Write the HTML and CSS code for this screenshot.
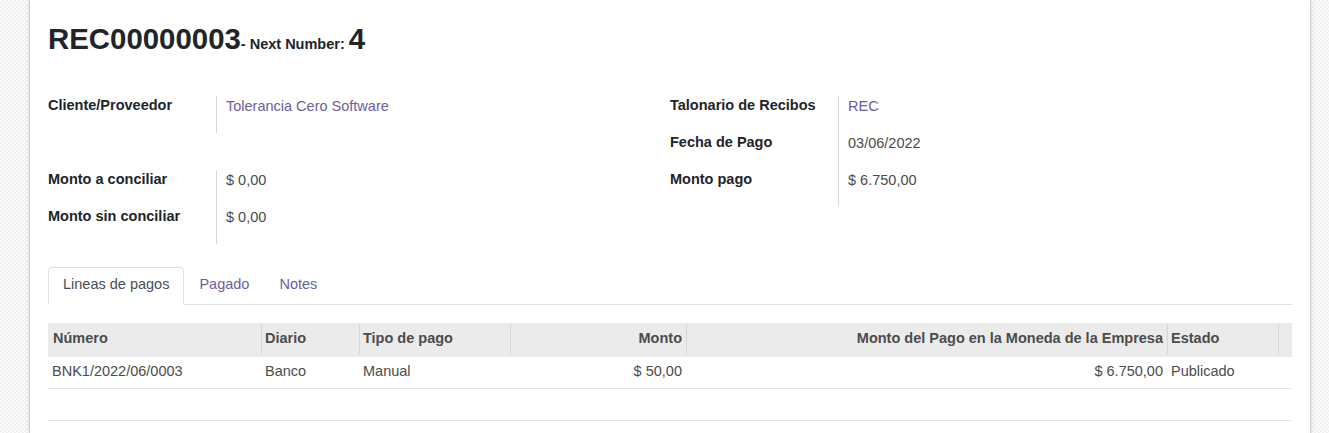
FILE: index.html
```html
<!DOCTYPE html>
<html lang="es">
<head>
<meta charset="utf-8">
<title>REC00000003</title>
<link rel="stylesheet" href="styles.css">
</head>
<body>
<div class="sheet">
  <h1 class="title">REC00000003<span class="next">- Next Number: </span>4</h1>

  <div class="groups">
    <div class="group">
      <div class="row"><div class="label">Cliente/Proveedor</div><div class="value"><a class="link">Tolerancia Cero Software</a></div></div>
      <div class="row"><div class="label"></div><div class="value empty"></div></div>
      <div class="row"><div class="label">Monto a conciliar</div><div class="value">$ 0,00</div></div>
      <div class="row"><div class="label">Monto sin conciliar</div><div class="value">$ 0,00</div></div>
    </div>
    <div class="group">
      <div class="row"><div class="label">Talonario de Recibos</div><div class="value"><a class="link">REC</a></div></div>
      <div class="row"><div class="label">Fecha de Pago</div><div class="value">03/06/2022</div></div>
      <div class="row"><div class="label">Monto pago</div><div class="value">$ 6.750,00</div></div>
    </div>
  </div>

  <ul class="tabs">
    <li class="tab active">Lineas de pagos</li>
    <li class="tab">Pagado</li>
    <li class="tab">Notes</li>
  </ul>

  <table class="list">
    <colgroup>
      <col class="c1"><col class="c2"><col class="c3"><col class="c4"><col class="c5"><col class="c6"><col class="c7">
    </colgroup>
    <thead>
      <tr>
        <th class="first">Número</th>
        <th>Diario</th>
        <th>Tipo de pago</th>
        <th class="num">Monto</th>
        <th class="num">Monto del Pago en la Moneda de la Empresa</th>
        <th>Estado</th>
        <th></th>
      </tr>
    </thead>
    <tbody>
      <tr>
        <td>BNK1/2022/06/0003</td>
        <td>Banco</td>
        <td>Manual</td>
        <td class="num">$ 50,00</td>
        <td class="num">$ 6.750,00</td>
        <td>Publicado</td>
        <td></td>
      </tr>
    </tbody>
    <tfoot>
      <tr><td colspan="7"><div class="spacer"></div></td></tr>
    </tfoot>
  </table>
</div>
</body>
</html>
```

FILE: styles.css
```css
html, body {
  margin: 0;
  padding: 0;
}
body {
  font-family: "Liberation Sans", Arial, sans-serif;
  font-size: 14.5px;
  color: #4c4c4c;
  height: 433px;
  overflow: hidden;
  background-color: #f7f7f7;
  background-image: repeating-conic-gradient(#f0f0f0 0 25%, #fcfcfc 0 50%);
  background-size: 4px 4px;
}
.sheet {
  box-sizing: border-box;
  margin-left: 29px;
  width: 1282px;
  min-height: 433px;
  background: #fff;
  border-left: 1px solid #cfcfcf;
  border-right: 1px solid #cfcfcf;
  box-shadow: 0 0 5px rgba(0, 0, 0, 0.12);
  padding: 21px 18px 0 18px;
}
.title {
  margin: 0 0 40px 0;
  font-size: 29.4px;
  line-height: 35px;
  height: 35px;
  font-weight: bold;
  color: #212529;
}
.next {
  font-size: 14.5px;
  line-height: 1;
  font-weight: bold;
}
.groups {
  display: grid;
  grid-template-columns: 622px 622px;
}
.group {
  display: flex;
  flex-direction: column;
}
.row {
  display: grid;
  grid-template-columns: 168px 1fr;
  height: 37px;
}
.label {
  font-weight: bold;
  color: #212529;
  line-height: 14px;
  padding-top: 2px;
}
.value {
  border-left: 1px solid #d8d8d8;
  padding-left: 9px;
  line-height: 14px;
  padding-top: 3px;
}
.value.empty {
  border-left-color: transparent;
}
.link {
  color: #6d5e9d;
  text-decoration: none;
}
.tabs {
  list-style: none;
  margin: 23px 0 0 0;
  padding: 0;
  display: flex;
  border-bottom: 1px solid #dee2e6;
}
.tab {
  border: 1px solid transparent;
  border-top-left-radius: 4px;
  border-top-right-radius: 4px;
  padding: 6px 14px 10px 14px;
  line-height: 20px;
  margin-bottom: -1px;
  color: #6d5e9d;
}
.tab.active {
  color: #495057;
  border-color: #dee2e6 #dee2e6 #fff;
  background: #fff;
}
.list {
  margin-top: 18px;
  width: 100%;
  border-collapse: collapse;
  table-layout: fixed;
}
.c1 { width: 213px; }
.c2 { width: 98px; }
.c3 { width: 151px; }
.c4 { width: 176px; }
.c5 { width: 481px; }
.c6 { width: 111px; }
.c7 { width: 14px; }
.list thead tr {
  background: #ebebeb;
}
.list th {
  padding: 7px 4px 10px 4px;
  line-height: 17px;
  text-align: left;
  font-weight: bold;
  color: #4c4c4c;
  white-space: nowrap;
  overflow: hidden;
  background-image: linear-gradient(#d6d6d6, #d6d6d6);
  background-size: 1px 30px;
  background-position: left 1px;
  background-repeat: no-repeat;
}
.list th.first {
  background-image: none;
  padding-left: 5px;
}
.list td {
  padding: 6px 4px 8px 4px;
  line-height: 17px;
  border-bottom: 1px solid #e2e2e2;
  white-space: nowrap;
}
.list .num {
  text-align: right;
}
.list tfoot td {
  padding: 0;
}
.spacer {
  height: 31px;
}
```
